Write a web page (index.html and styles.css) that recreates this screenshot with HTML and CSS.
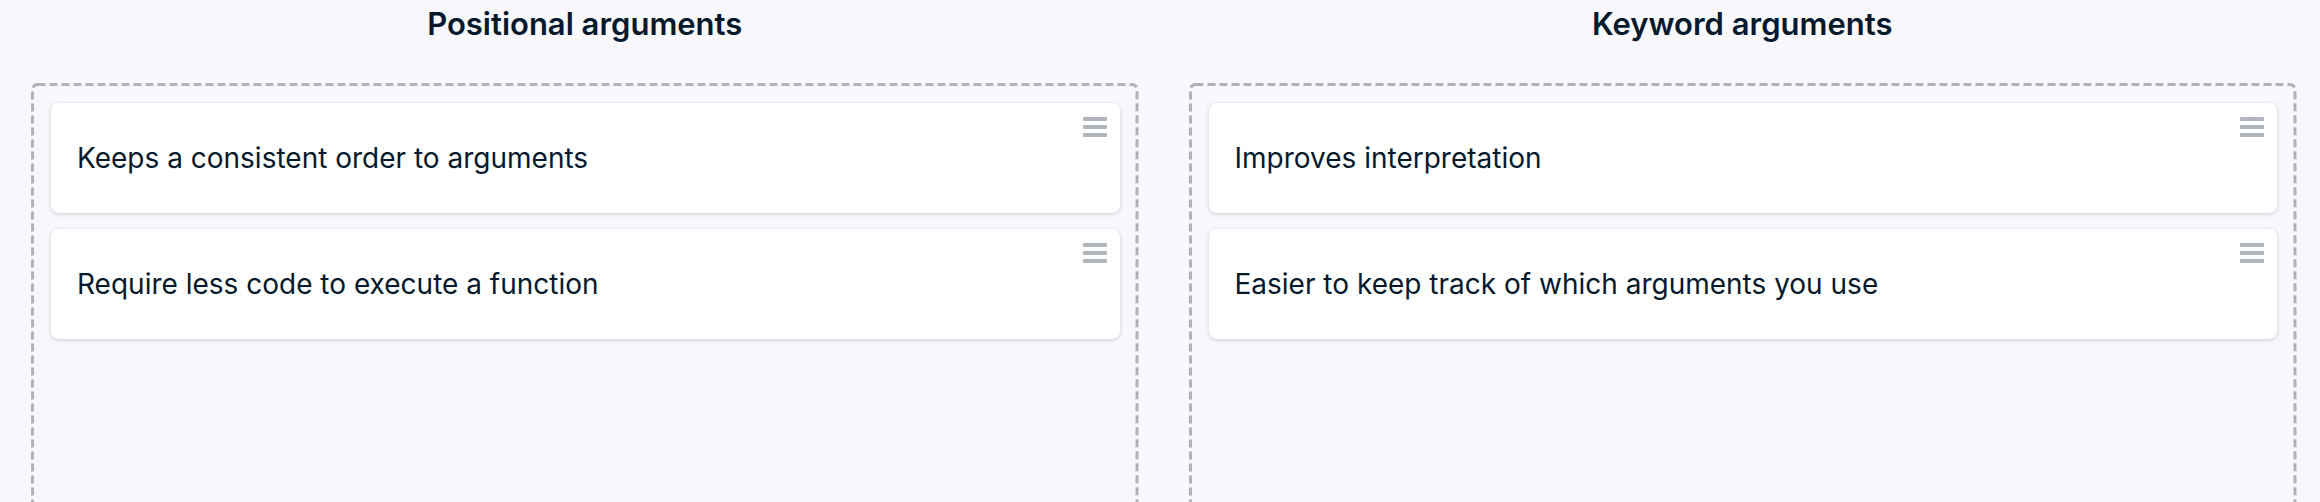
FILE: index.html
```html
<!DOCTYPE html>
<html lang="en">
<head>
<meta charset="utf-8">
<title>Drag and drop</title>
<link rel="stylesheet" href="styles.css">
</head>
<body>
<div class="board">
  <section class="column">
    <h2 class="column-title">Positional arguments</h2>
    <div class="dropzone">
      <svg class="dash" aria-hidden="true"><rect x="1.5" y="1.5" rx="5" ry="5"/></svg>
      <div class="card">
        <span class="card-text">Keeps a consistent order to arguments</span>
        <svg class="handle" width="24" height="21" viewBox="0 0 24 21"><rect x="0" y="0" width="24" height="4" rx="1"/><rect x="0" y="8" width="24" height="4" rx="1"/><rect x="0" y="16" width="24" height="4" rx="1"/></svg>
      </div>
      <div class="card">
        <span class="card-text">Require less code to execute a function</span>
        <svg class="handle" width="24" height="21" viewBox="0 0 24 21"><rect x="0" y="0" width="24" height="4" rx="1"/><rect x="0" y="8" width="24" height="4" rx="1"/><rect x="0" y="16" width="24" height="4" rx="1"/></svg>
      </div>
    </div>
  </section>
  <section class="column">
    <h2 class="column-title">Keyword arguments</h2>
    <div class="dropzone">
      <svg class="dash" aria-hidden="true"><rect x="1.5" y="1.5" rx="5" ry="5"/></svg>
      <div class="card">
        <span class="card-text">Improves interpretation</span>
        <svg class="handle" width="24" height="21" viewBox="0 0 24 21"><rect x="0" y="0" width="24" height="4" rx="1"/><rect x="0" y="8" width="24" height="4" rx="1"/><rect x="0" y="16" width="24" height="4" rx="1"/></svg>
      </div>
      <div class="card">
        <span class="card-text">Easier to keep track of which arguments you use</span>
        <svg class="handle" width="24" height="21" viewBox="0 0 24 21"><rect x="0" y="0" width="24" height="4" rx="1"/><rect x="0" y="8" width="24" height="4" rx="1"/><rect x="0" y="16" width="24" height="4" rx="1"/></svg>
      </div>
    </div>
  </section>
</div>
</body>
</html>
```
FILE: styles.css
```css
html, body {
  margin: 0;
  padding: 0;
  background: #f7f7fc;
}
body {
  font-family: Inter, "Liberation Sans", sans-serif;
  color: #05192d;
}
.board {
  display: grid;
  grid-template-columns: 1fr 1fr;
  gap: 50px;
  padding: 0 24px 0 31px;
}
.column {
  display: flex;
  flex-direction: column;
}
.column-title {
  margin: 0 0 35px;
  height: 48px;
  line-height: 48px;
  font-size: 31px;
  font-weight: 600;
  text-align: center;
}
.dropzone {
  position: relative;
  padding: 20px 19px 20px 20px;
  min-height: 600px;
  display: flex;
  flex-direction: column;
  gap: 16px;
}
.dash {
  position: absolute;
  inset: 0;
  width: 100%;
  height: 100%;
  pointer-events: none;
  overflow: visible;
}
.dash rect {
  width: calc(100% - 3px);
  height: calc(100% - 3px);
  fill: none;
  stroke: #aeb2b9;
  stroke-width: 3;
  stroke-dasharray: 8 4;
}
.card {
  position: relative;
  background: #fff;
  border-radius: 8px;
  height: 110px;
  box-sizing: border-box;
  padding: 0 26px;
  display: flex;
  align-items: center;
  box-shadow: 0 1px 4px rgba(5, 25, 45, 0.18);
}
.card-text {
  font-size: 28px;
}
.handle {
  position: absolute;
  top: 14px;
  right: 13px;
  fill: #b1b5bc;
}
```
